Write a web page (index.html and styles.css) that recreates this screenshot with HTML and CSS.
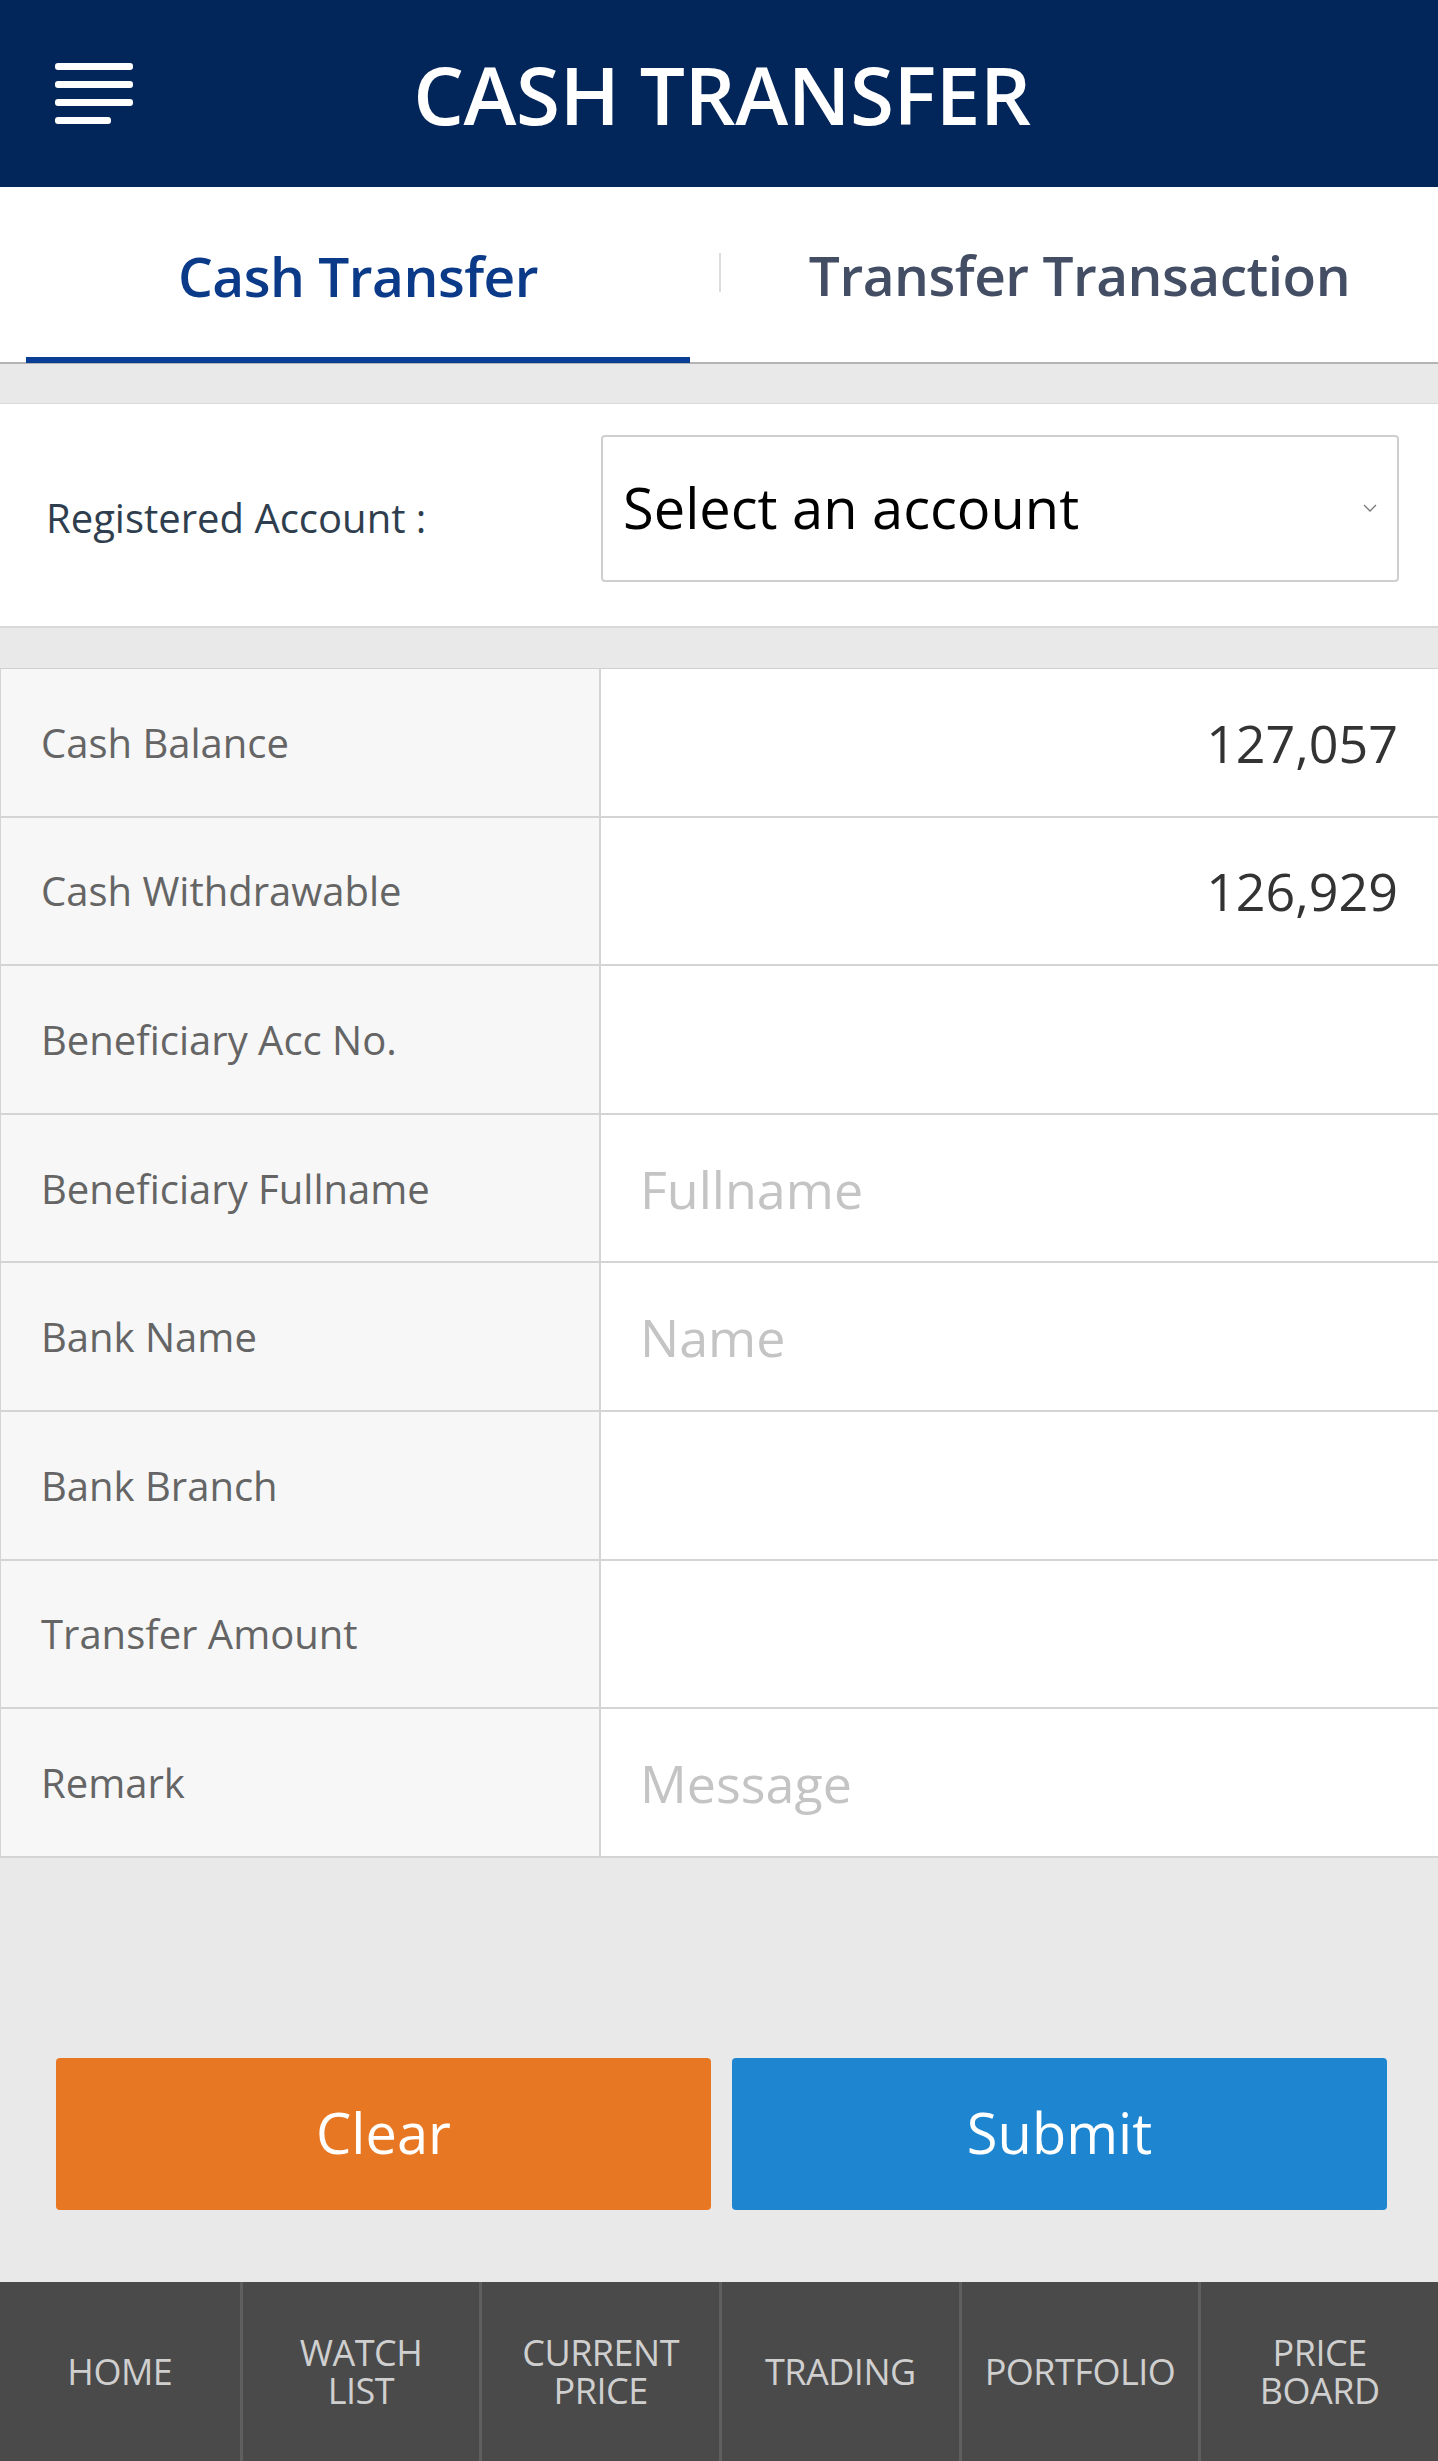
FILE: index.html
```html
<!DOCTYPE html>
<html>
<head>
<meta charset="utf-8">
<link rel="stylesheet" href="styles.css">
</head>
<body>
<div class="app">
  <header class="topbar">
    <div class="menu">
      <span class="bar"></span><span class="bar"></span><span class="bar"></span><span class="bar short"></span>
    </div>
    <h1 class="title">CASH TRANSFER</h1>
  </header>

  <nav class="tabs">
    <div class="tab active"><span>Cash Transfer</span></div>
    <div class="tab-sep"></div>
    <div class="tab"><span>Transfer Transaction</span></div>
  </nav>

  <section class="account">
    <label class="account-label">Registered Account :</label>
    <div class="select">
      <span>Select an account</span>
      <svg class="chev" width="14" height="9" viewBox="0 0 14 9"><path d="M1 1 L7 7 L13 1" fill="none" stroke="#777" stroke-width="1.3"/></svg>
    </div>
  </section>

  <section class="form">
    <div class="row"><div class="lbl">Cash Balance</div><div class="val num">127,057</div></div>
    <div class="row"><div class="lbl">Cash Withdrawable</div><div class="val num">126,929</div></div>
    <div class="row"><div class="lbl">Beneficiary Acc No.</div><div class="val"></div></div>
    <div class="row"><div class="lbl">Beneficiary Fullname</div><div class="val ph">Fullname</div></div>
    <div class="row"><div class="lbl">Bank Name</div><div class="val ph">Name</div></div>
    <div class="row"><div class="lbl">Bank Branch</div><div class="val"></div></div>
    <div class="row"><div class="lbl">Transfer Amount</div><div class="val"></div></div>
    <div class="row"><div class="lbl">Remark</div><div class="val ph">Message</div></div>
  </section>

  <div class="actions">
    <button class="btn clear">Clear</button>
    <button class="btn submit">Submit</button>
  </div>

  <footer class="bottomnav">
    <div class="nav-item"><span>HOME</span></div>
    <div class="nav-item"><span>WATCH</span><span>LIST</span></div>
    <div class="nav-item"><span>CURRENT</span><span>PRICE</span></div>
    <div class="nav-item"><span>TRADING</span></div>
    <div class="nav-item"><span>PORTFOLIO</span></div>
    <div class="nav-item"><span>PRICE</span><span>BOARD</span></div>
  </footer>
</div>
</body>
</html>
```

FILE: styles.css
```css
* { box-sizing: border-box; }
html, body { margin: 0; padding: 0; }
body {
  background: #e9e9e9;
  font-family: "Open Sans", "Noto Sans", sans-serif;
  width: 1438px;
}
.app { display: flex; flex-direction: column; min-height: 2461px; }

.topbar {
  height: 187px;
  background: #03265a;
  display: flex;
  align-items: center;
  position: relative;
}
.menu {
  position: absolute;
  left: 55px;
  top: 63px;
  display: flex;
  flex-direction: column;
  gap: 11px;
}
.bar { display: block; width: 78px; height: 7px; background: #fff; border-radius: 3px; }
.bar.short { width: 56px; }
.title {
  margin: 0;
  width: 100%;
  text-align: center;
  color: #fff;
  font-size: 80px;
  font-weight: 600;
  letter-spacing: -0.4px;
  padding-left: 6px;
}

.tabs {
  height: 177px;
  background: #fff;
  display: flex;
  align-items: stretch;
  border-bottom: 2px solid #b4b4b4;
}
.tab {
  flex: 1;
  display: flex;
  align-items: center;
  justify-content: center;
  font-size: 55px;
  font-weight: 600;
  color: #434d63;
  padding-top: 0;
  letter-spacing: -0.5px;
}
.tab.active {
  flex: 0 0 664px;
  color: #0b3a88;
  margin: 0 29px -1px 26px;
  border-bottom: 6px solid #0a3d94;
  padding-top: 6px;
}
.tab-sep {
  width: 2px;
  height: 39px;
  background: #dcdcdc;
  align-self: flex-start;
  margin-top: 66px;
}

.account {
  margin-top: 39px;
  height: 225px;
  background: #fff;
  border-top: 1px solid #d8d8d8;
  border-bottom: 2px solid #d8d8d8;
  display: flex;
  align-items: flex-start;
}
.account-label {
  width: 601px;
  padding-left: 46px;
  font-size: 40px;
  color: #2f3e4e;
  margin-top: 86px;
}
.select {
  margin-top: 31px;
  width: 798px;
  height: 147px;
  border: 2px solid #cfcfcf;
  border-radius: 4px;
  display: flex;
  align-items: center;
  justify-content: space-between;
  padding: 0 20px 0 20px;
  font-size: 56px;
  color: #000;
}
.select span { margin-top: -4px; }

.form {
  margin-top: 40px;
  background: #fff;
  border-top: 1px solid #cfcfcf;
}
.row {
  display: flex;
  height: 148.6px;
  border-bottom: 2px solid #d4d4d4;
}
.lbl {
  width: 601px;
  background: #f7f7f7;
  border-left: 1px solid #d4d4d4;
  border-right: 2px solid #d4d4d4;
  display: flex;
  align-items: center;
  padding-left: 40px;
  font-size: 40px;
  color: #656565;
}
.val {
  flex: 1;
  display: flex;
  align-items: center;
  padding: 0 40px 0 39px;
  font-size: 52px;
  color: #333;
}
.val.num { justify-content: flex-end; }
.val.ph { color: #c4c4c4; }

.actions {
  flex: 1;
  display: flex;
  gap: 21px;
  padding: 200px 50px 0 56px;
}
.btn {
  width: 655px;
  height: 152px;
  border: none;
  border-radius: 4px;
  color: #fff;
  font-family: "Open Sans", "Noto Sans", sans-serif;
  font-size: 56px;
  padding-bottom: 4px;
}
.btn.clear { background: #e87723; }
.btn.submit { background: #1e86d0; }

.bottomnav {
  height: 179px;
  background: #4a4a4a;
  display: flex;
}
.nav-item {
  flex: 0 0 239.67px;
  display: flex;
  flex-direction: column;
  align-items: center;
  justify-content: center;
  text-align: center;
  color: #cfcfcf;
  font-size: 36px;
  border-left: 3px solid #5f5f5f;
  letter-spacing: -0.5px;
}
.nav-item span { display: block; line-height: 38px; height: 38px; }
.nav-item:first-child { border-left: none; }
```
